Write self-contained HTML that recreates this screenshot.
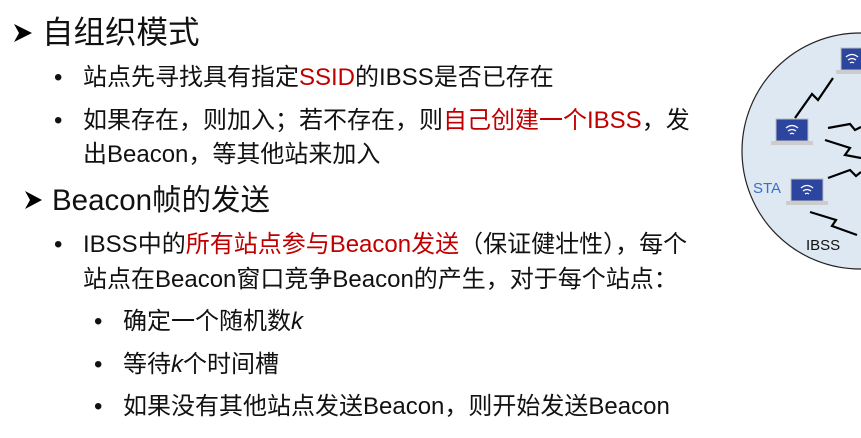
<!DOCTYPE html>
<html><head><meta charset="utf-8"><style>
body{margin:0;width:861px;height:438px;background:#fff;overflow:hidden;position:relative;font-family:"Liberation Sans","Noto Sans CJK SC",sans-serif;color:#111}
.t{position:absolute;white-space:nowrap;line-height:1}
.r{color:#c00000}
.b{font-size:24px}
</style></head><body>
<svg style="position:absolute;left:0;top:0" width="861" height="438">
<circle cx="860" cy="151" r="118" fill="#dde8f3" stroke="#222" stroke-width="1.2"/>
<g stroke="#000" stroke-width="2.2" fill="none">
<polyline points="795,118 812,94 818,100 833,78"/>
<polyline points="828,128 850,124 855,130 861,127"/>
<polyline points="825,140 850,148 845,155 861,158"/>
<polyline points="828,178 850,170 856,176 861,172"/>
<polyline points="810,212 836,220 832,226 857,235"/>
</g>
<g>
<rect x="776" y="119" width="32" height="22" fill="#2c46a0" stroke="#bbb"/><rect x="771" y="141" width="42" height="4" fill="#ccc"/>
<rect x="791" y="179" width="32" height="22" fill="#2c46a0" stroke="#bbb"/><rect x="786" y="201" width="42" height="4" fill="#ccc"/>
<rect x="841" y="48" width="22" height="22" fill="#2c46a0" stroke="#bbb"/><rect x="836" y="70" width="30" height="4" fill="#ccc"/>
</g>
<g fill="none" stroke="#fff" stroke-width="1.3">
<path d="M786,128 q6,-5 12,0 M788,131 q4,-3 8,0 M790,134 q2,-1.5 4,0"/>
<path d="M801,188 q6,-5 12,0 M803,191 q4,-3 8,0 M805,194 q2,-1.5 4,0"/>
<path d="M846,57 q6,-5 12,0 M848,60 q4,-3 8,0 M850,63 q2,-1.5 4,0"/>
</g>
<path d="M14,24 L32,33 L14,42 L19,33 Z" fill="#000"/>
<path d="M25,191 L42,200 L25,209 L30,200 Z" fill="#000"/>
</svg>
<div class="t" style="left:753px;top:181px;font-size:15px;color:#3a6fc4">STA</div>
<div class="t" style="left:806px;top:238px;font-size:15px;color:#111">IBSS</div>
<div class="t" style="left:42px;top:17px;font-size:31.5px">自组织模式</div>
<div class="t b" style="left:54px;top:66px">•</div>
<div class="t b" style="left:83px;top:66px">站点先寻找具有指定<span class="r">SSID</span>的IBSS是否已存在</div>
<div class="t b" style="left:54px;top:109px">•</div>
<div class="t b" style="left:83px;top:109px">如果存在，则加入；若不存在，则<span class="r">自己创建一个IBSS</span>，发</div>
<div class="t b" style="left:83px;top:143px">出Beacon，等其他站来加入</div>
<div class="t" style="left:52px;top:186px;font-size:29.5px">Beacon帧的发送</div>
<div class="t b" style="left:54px;top:233px">•</div>
<div class="t b" style="left:83px;top:233px">IBSS中的<span class="r">所有站点参与Beacon发送</span>（保证健壮性），每个</div>
<div class="t b" style="left:83px;top:268px">站点在Beacon窗口竞争Beacon的产生，对于每个站点：</div>
<div class="t b" style="left:94px;top:310px">•</div>
<div class="t b" style="left:123px;top:310px">确定一个随机数<i>k</i></div>
<div class="t b" style="left:94px;top:353px">•</div>
<div class="t b" style="left:123px;top:353px">等待<i>k</i>个时间槽</div>
<div class="t b" style="left:94px;top:395px">•</div>
<div class="t b" style="left:123px;top:395px">如果没有其他站点发送Beacon，则开始发送Beacon</div>
</body></html>
